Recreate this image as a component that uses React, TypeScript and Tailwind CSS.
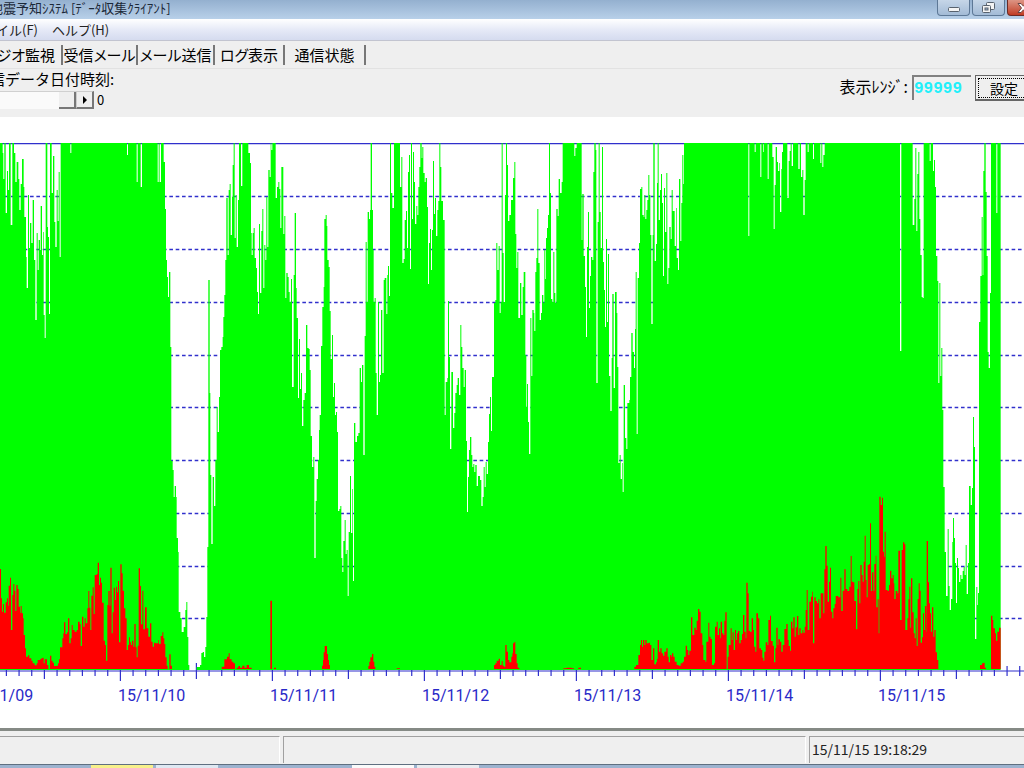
import { useState } from 'react';

type Block = { x: number; steps: string };

const tabs = [
  { id: 'radio', label: 'ラジオ監視', width: 'w-[85px]' },
  { id: 'inbox', label: '受信メール', width: 'w-[75px]' },
  { id: 'outbox', label: 'メール送信', width: 'w-[77px]' },
  { id: 'log', label: 'ログ表示', width: 'w-[70px]' },
  { id: 'status', label: '通信状態', width: 'w-[81px]' },
];

const days = [
  { x: -32, label: '15/11/09' },
  { x: 120, label: '15/11/10' },
  { x: 272, label: '15/11/11' },
  { x: 424, label: '15/11/12' },
  { x: 576, label: '15/11/13' },
  { x: 728, label: '15/11/14' },
  { x: 880, label: '15/11/15' },
];

const gridLines = [196, 249, 302, 355, 407, 460, 513, 566, 618];

// Each block starts at x; steps are "sample,level" with three samples per unit.
const peakBlocks: Block[] = [
  {
    x: 0,
    steps:
      '0,143 8,153 10,179 13,143 17,213 21,171 24,190 27,143 32,225 37,143 42,153 46,182 50,162 55,179 58,210 62,184 66,159 71,187 73,217 78,257 80,288 84,195 87,248 90,223 94,243 98,200 102,260 106,320 110,233 113,270 116,240 120,250 122,206 126,255 129,232 131,315 134,338 137,143 142,227 144,237 147,314 150,143 155,193 159,156 163,222 166,247 170,190 173,221 176,172 179,257 182,143 211,153 214,143 381,155 384,143 410,182 413,143 422,187 426,143 473,182 476,143 479,182 483,143 491,162 495,209 498,260 501,277 504,297 507,272 511,347 514,461 518,470 521,497 524,486 528,497 530,538 534,552 536,612 541,618 545,632 551,627 556,610 559,602 562,637 565,665 568,670 590,667 600,665 604,653 608,652 612,657 616,647 619,617 622,547 625,280 629,393 631,475 634,544 638,477 642,506 646,460 650,407 653,432 657,397 660,350 664,347 668,337 670,317 673,295 676,260 679,198 683,255 686,190 689,184 692,235 696,197 698,165 701,143 704,238 707,195 710,247 714,200 717,143 723,186 727,143 745,153',
  },
  {
    x: 250,
    steps:
      '0,163 3,233 5,255 8,233 11,228 14,258 18,268 21,292 24,314 27,224 30,293 34,231 37,209 40,288 43,245 46,260 49,197 52,247 55,170 59,177 62,143 64,150 67,143 77,198 81,187 85,182 88,189 91,228 94,167 100,234 103,216 106,298 109,273 113,277 116,292 119,302 123,279 126,387 131,275 134,213 138,288 140,318 144,398 147,339 150,389 153,373 156,426 160,400 164,393 168,325 172,348 176,349 179,370 182,436 186,467 190,457 193,558 197,501 200,479 204,460 207,430 209,415 213,346 217,307 221,287 223,219 227,215 230,226 232,260 236,267 239,311 242,359 246,335 249,397 252,383 255,415 258,412 261,432 264,511 268,509 271,506 274,558 277,572 280,541 284,520 287,554 290,550 293,596 296,532 300,476 303,533 307,489 309,581 312,423 316,442 321,436 325,433 329,368 333,382 336,365 340,455 344,336 347,242 350,302 353,212 357,219 360,210 362,143 366,210 369,250 371,302 374,298 377,373 380,415 384,302 387,382 390,375 393,310 397,373 401,280 404,278 409,314 412,275 414,266 417,296 420,143 423,193 427,208 432,143 450,187 454,157 457,263 461,259 464,220 468,211 471,248 474,172 477,155 480,269 483,143 486,219 489,152 492,182 495,224 499,206 502,215 505,187 508,167 511,143 515,158 517,147 520,173 524,182 527,178 531,207 534,284 537,243 540,229 543,270 546,230 549,161 552,214 555,198 558,236 562,210 565,201 568,143 571,167 574,201 579,220 584,415 587,382 592,378 594,301 597,357 600,449 604,372 609,428 613,413 616,393 620,385 623,378 627,395 631,325 634,347 637,368 641,387 644,370 648,441 651,512 654,477 657,450 660,437 664,455 667,467 670,464 673,472 676,465 680,486 684,476 690,480 694,506 698,497 701,467 704,487 707,462 710,474 714,442 717,414 720,397 723,431 726,377 732,303 736,300 739,243 742,270 746,246 749,313',
  },
  {
    x: 500,
    steps:
      '2,302 5,143 8,253 11,302 15,195 18,143 21,165 24,221 28,215 33,200 39,178 43,162 46,234 49,268 52,252 55,318 60,283 64,315 68,287 71,272 76,355 79,407 81,384 84,422 87,454 91,318 94,376 97,310 101,313 103,331 106,272 109,258 112,209 115,263 119,320 123,313 126,295 130,303 133,250 136,279 138,238 141,228 144,215 147,143 150,193 153,299 157,302 160,252 163,293 166,303 169,209 173,216 176,179 180,193 185,182 188,143 223,156 226,148 230,143 245,240 247,194 251,256 255,287 258,337 261,247 264,212 267,308 270,276 273,257 277,260 280,172 283,143 287,150 289,383 293,222 296,143 299,212 302,248 306,147 309,262 312,290 315,327 318,239 321,322 324,254 327,376 331,411 335,358 337,294 341,388 345,292 350,313 352,367 355,463 359,455 362,479 366,463 368,492 371,385 375,438 379,449 382,403 388,400 390,377 394,333 398,352 402,368 405,329 407,272 410,434 413,278 417,243 420,189 424,187 427,215 431,217 433,195 436,219 439,210 442,200 445,175 448,195 451,235 454,324 458,235 460,143 464,261 468,244 471,183 473,143 476,220 480,190 483,174 486,203 489,276 492,188 495,232 499,173 502,284 505,268 508,227 512,239 515,190 518,211 524,246 528,208 530,258 534,270 537,179 541,241 544,203 547,155 550,184 552,143 745,236 748,143',
  },
  {
    x: 750,
    steps:
      '0,143 14,152 17,143 31,177 34,143 40,152 42,143 53,179 56,143 67,157 71,229 74,185 77,147 81,162 84,171 88,163 90,212 94,169 96,152 99,143 112,198 116,161 119,151 122,143 125,166 129,143 145,169 149,143 153,177 157,170 160,215 164,180 167,143 173,152 176,143 189,159 192,143 211,163 214,143 217,167 220,155 224,143 450,351 454,143 488,225 493,199 496,148 499,231 502,174 505,152 508,219 511,255 515,297 518,298 521,143 539,161 542,143 549,171 552,160 555,187 558,256 562,281 565,383 568,283 571,376 574,348 577,410 580,487 584,552 588,596 593,529 596,586 599,610 603,599 607,542 609,518 612,538 615,563 618,603 621,558 624,568 627,582 631,575 634,579 638,571 641,567 644,575 647,545 650,594 654,563 657,486 662,505 666,488 669,417 672,447 675,639 679,587 682,605 684,593 687,322 691,276 695,217 698,275 700,171 703,143 707,192 710,256 713,352 716,368 720,293 723,143 739,213 742,143 752,670',
  },
];

// Levels here are also in thirds of a unit, counted down from 400.
const noiseBlocks: Block[] = [
  {
    x: 0,
    steps:
      '0,507 3,595 6,635 9,612 12,638 17,607 21,595 24,617 26,557 30,533 33,690 37,585 40,552 43,572 46,633 49,555 53,567 56,620 60,638 62,618 65,640 69,655 71,705 75,745 78,770 84,766 88,775 94,782 98,790 104,796 110,790 113,780 120,778 124,775 128,773 131,790 134,778 141,795 145,808 150,767 154,782 158,788 162,798 170,797 174,790 177,778 180,742 187,715 190,700 192,667 196,702 201,697 204,655 208,730 212,715 215,675 218,690 224,695 230,690 234,665 239,672 242,738 246,650 250,680 254,655 257,670 262,625 265,573 268,623 271,690 274,587 278,562 281,642 284,525 290,522 293,488 297,555 300,533 303,548 306,608 311,722 315,735 318,782 322,615 325,573 329,617 331,503 335,700 338,637 341,563 345,600 348,560 351,577 354,543 357,727 361,493 365,520 368,572 372,625 376,655 380,750 384,735 387,712 390,727 393,735 396,722 400,740 403,672 407,742 410,772 413,737 416,505 420,558 423,673 427,572 430,688 435,622 440,685 445,710 450,670 454,725 458,740 462,728 466,730 475,720 477,732 482,708 487,697 490,715 493,732 496,772 500,797 503,808 508,763 512,797 516,808 665,800 673,778 681,770 686,760 689,778 695,785 700,790 705,808 710,803 715,798 720,803 727,797 733,803 740,795 747,803',
  },
  {
    x: 250,
    steps:
      '0,803 5,808 61,602 66,808 72,803 78,808 216,797 219,780 221,757 224,738 231,762 234,780 237,795 240,808 355,798 358,785 361,772 366,762 370,785 373,800 376,808 440,805 450,808 732,795 736,790 740,782 746,776',
  },
  {
    x: 500,
    steps:
      '0,795 5,783 8,797 12,800 16,735 20,755 24,780 28,787 34,770 37,760 39,730 43,726 46,762 50,790 53,803 58,808 190,805 200,803 215,805 222,808 235,803 243,808 403,800 408,795 415,765 420,735 423,720 426,740 429,720 433,735 436,720 440,730 446,728 450,735 454,780 459,745 463,793 468,787 471,777 473,720 477,755 481,745 485,760 489,767 493,755 499,745 503,770 506,787 510,765 514,770 516,760 520,770 524,785 530,795 536,797 542,790 548,785 552,770 557,737 561,750 565,765 568,752 573,652 577,705 583,683 587,690 590,662 594,627 598,635 602,700 607,735 610,780 616,785 619,725 625,668 628,710 632,717 636,795 642,790 645,680 650,665 653,705 657,685 660,715 662,665 666,700 670,705 673,662 676,637 680,808 683,770 686,735 692,685 695,720 698,697 701,750 705,690 708,720 711,700 714,693 718,730 722,720 726,702 729,645 733,695 737,715 739,548 743,580 746,692',
  },
  {
    x: 750,
    steps:
      '0,695 5,655 9,690 12,740 16,755 19,640 24,655 28,745 33,750 37,773 40,782 43,755 47,727 52,735 55,660 60,647 63,723 68,737 72,787 76,745 79,683 83,735 85,718 90,725 94,755 98,735 103,687 109,672 113,720 116,738 120,752 123,665 127,685 130,652 134,710 137,682 141,648 145,705 148,685 152,700 157,690 160,698 164,680 167,630 170,570 173,690 178,605 183,590 187,575 189,730 193,592 197,603 201,610 205,598 208,655 212,580 220,640 223,508 226,438 230,497 233,605 237,545 240,503 243,635 247,655 250,625 254,612 257,588 265,592 271,533 274,633 278,572 283,508 287,567 292,573 298,560 302,468 305,545 309,547 313,603 318,688 322,567 325,543 328,610 331,495 335,525 338,545 341,485 344,407 347,540 350,592 353,495 357,492 360,370 363,573 366,517 370,572 373,492 377,467 379,622 383,598 386,700 388,290 392,315 396,293 399,455 402,470 404,395 407,570 412,572 417,555 420,512 424,535 428,525 431,550 433,597 437,573 442,580 445,452 450,660 455,450 459,427 463,433 466,690 472,655 475,598 478,560 481,683 483,535 487,637 491,700 494,715 497,655 500,738 503,597 506,550 509,572 512,728 516,712 519,640 522,690 525,618 529,695 530,423 534,547 537,610 540,640 543,695 546,622 550,710 553,690 557,757 561,780 565,808 690,795 696,790 701,788 704,803 708,808 723,647 727,660 730,685 735,700 738,722 742,695 747,683 752,808',
  },
];

function stepPath(blocks: Block[], base: number, level: (v: number) => number) {
  let d = `M0 ${base}`;
  for (const block of blocks) {
    for (const step of block.steps.split(' ')) {
      const [sample, value] = step.split(',').map(Number);
      d += `H${(block.x + sample / 3).toFixed(2)}V${level(value).toFixed(2)}`;
    }
  }
  return `${d}V${base}Z`;
}

const peakPath = stepPath(peakBlocks, 670, (v) => v);
const noisePath = stepPath(noiseBlocks, 669, (v) => Math.min(669, 400 + v / 3));

// Two-hour ticks, longer at noon and at midnight
const ticks = Array.from({ length: 84 }, (_, i) => ({
  x: -32 + (i * 152) / 12,
  size: i % 12 === 0 ? 10 : i % 6 === 0 ? 8 : 5,
}));

function Chart() {
  return (
    <svg viewBox="0 117 1024 611" className="block w-full bg-white" role="img" aria-label="ラジオ監視グラフ">
      <g stroke="#3030cc" fill="none">
        <path d="M0 143.6H1024" strokeWidth="1.3" />
        {gridLines.map((y) => (
          <path
            key={y}
            d={`M0 ${y + 0.5}H1024`}
            strokeWidth="1.3"
            strokeDasharray="3.6 2.733"
            strokeDashoffset="-4.7"
          />
        ))}
        <path d="M0 671H1024" strokeWidth="1.2" />
        {ticks.map((t) => (
          <path key={t.x} d={`M${(t.x + 0.4).toFixed(2)} ${671 - t.size}v${t.size * 2}`} strokeWidth="1.2" />
        ))}
      </g>
      <path d={peakPath} fill="#00ff00" />
      <path d={noisePath} fill="#ff0000" />
      <g className="fill-[#2a2ac8] font-[Roboto,sans-serif] text-[16px]">
        {days.map((day) => (
          <text key={day.label} x={day.x - 2} y="701">
            {day.label}
          </text>
        ))}
      </g>
    </svg>
  );
}

export default function App() {
  const [active, setActive] = useState('radio');
  const [range, setRange] = useState('99999');
  const [position, setPosition] = useState(100);

  return (
    <div className="flex min-h-screen flex-col overflow-hidden bg-[#efefef] font-['Noto_Sans_CJK_JP',sans-serif] text-black">
      {/* Title bar */}
      <header className="flex h-[19px] items-start justify-between overflow-hidden bg-linear-to-b from-[#94b0cf] to-[#b8d0e9]">
        <h1 className="-ml-[10px] whitespace-nowrap text-[13px] leading-4 text-[#1b2838]">
          地震予知ｼｽﾃﾑ [ﾃﾞｰﾀ収集ｸﾗｲｱﾝﾄ]
        </h1>
        <div className="-mr-4 flex gap-[2px]">
          <button
            aria-label="最小化"
            className="flex h-4 w-[33px] items-center justify-center rounded-b border border-t-0 border-[#5d7896] bg-linear-to-b from-[#c6d6e8] to-[#a3bbd6]"
          >
            <svg width="12" height="5" className="mt-1">
              <rect x="0.5" y="0.5" width="11" height="4" rx="1" fill="#f4f4f4" stroke="#58626e" />
            </svg>
          </button>
          <button
            aria-label="元に戻す"
            className="flex h-4 w-[33px] items-center justify-center rounded-b border border-t-0 border-[#5d7896] bg-linear-to-b from-[#c6d6e8] to-[#a3bbd6]"
          >
            <svg width="13" height="12" fill="#f4f4f4" stroke="#58626e">
              <rect x="4.5" y="0.5" width="8" height="7" rx="1" />
              <rect x="0.5" y="3.5" width="8" height="7" rx="1" />
              <rect x="3" y="6" width="3" height="2" fill="#a3bbd6" />
            </svg>
          </button>
          <button
            aria-label="閉じる"
            className="flex h-4 w-[33px] items-center justify-center rounded-b border border-t-0 border-[#6b2a24] bg-linear-to-b from-[#dc9484] to-[#c03a22]"
          >
            <svg width="13" height="10" viewBox="0 0 13 10">
              <path d="M1 .5h3l2.500 2.700L9 .5h3L8.500 5l3.500 4.500H9L6.500 6.800 4 9.500H1L4.500 5z" fill="#fff" stroke="#6a4444" />
            </svg>
          </button>
        </div>
      </header>

      {/* Menu bar */}
      <nav className="flex h-[22px] items-center gap-[14px] border-b border-[#c2c4d0] bg-linear-to-b from-white via-[#e6eaf7] to-[#d5dbef] text-[13px] leading-5 text-[#222]">
        <button className="-ml-[30px] whitespace-nowrap">ファイル(F)</button>
        <button className="whitespace-nowrap">ヘルプ(H)</button>
      </nav>

      {/* Tabs */}
      <div role="tablist" className="-ml-[22px] flex h-7 items-center border-b border-[#e2e2e2] text-[15px] leading-5">
        {tabs.map((tab) => (
          <button
            key={tab.id}
            role="tab"
            aria-selected={active === tab.id}
            onClick={() => setActive(tab.id)}
            className={`h-5 whitespace-nowrap border-r-2 border-[#777] text-center [font-feature-settings:'palt'] ${tab.width} ${
              active === tab.id ? 'pb-1' : ''
            }`}
          >
            {tab.label}
          </button>
        ))}
      </div>

      {/* Toolbar */}
      <section className="flex h-12 items-start justify-between">
        <div>
          <label htmlFor="position" className="-ml-[25px] mb-[2px] block whitespace-nowrap text-[15px] leading-5">
            受信データ日付時刻:
          </label>
          <div className="flex h-[18px] items-center">
            <input
              id="position"
              type="range"
              value={position}
              onChange={(e) => setPosition(Number(e.target.value))}
              className="h-[18px] w-[76px] appearance-none border-t border-[#d0d0d0] bg-[#fafafa] [&::-webkit-slider-thumb]:h-[17px] [&::-webkit-slider-thumb]:w-[17px] [&::-webkit-slider-thumb]:appearance-none [&::-webkit-slider-thumb]:border-r-2 [&::-webkit-slider-thumb]:border-b-2 [&::-webkit-slider-thumb]:border-[#777] [&::-webkit-slider-thumb]:bg-[#efefef]"
            />
            <button
              aria-label="次へ"
              className="flex h-[18px] w-[18px] items-center justify-center border border-r-2 border-b-2 border-[#777] border-t-[#ccc] border-l-[#ccc]"
            >
              <svg width="4" height="8">
                <path d="M0 0l4 4-4 4z" />
              </svg>
            </button>
            <output className="ml-[3px] text-[13px] leading-4">{100 - position}</output>
          </div>
        </div>

        <div className="-mr-[10px] flex items-start pt-[6px]">
          <label htmlFor="range" className="mr-1 whitespace-nowrap text-[16px] leading-[22px]">
            表示ﾚﾝｼﾞ:
          </label>
          <input
            id="range"
            value={range}
            onChange={(e) => setRange(e.target.value)}
            className="h-[25px] w-[59px] border-t-2 border-l-2 border-[#808080] bg-[#efefef] font-['Liberation_Mono',monospace] text-[16px] font-bold text-[#22f0fa]"
          />
          <button className="ml-1 h-[26px] w-[59px] border border-r-2 border-b-2 border-[#666] p-[2px] text-[14px] leading-[18px]">
            <span className="block border border-dotted border-black">設定</span>
          </button>
        </div>
      </section>

      <main>
        <Chart />
      </main>

      {/* Status bar */}
      <footer className="flex h-9 gap-[3px] border-t-[3px] border-[#858a85] pt-[5px] pb-px text-[14px] leading-[25px]">
        <div className="w-[280px] shrink-0 border-t border-r border-t-[#a0a0a0] border-r-white" />
        <div className="flex-1 border border-b-0 border-t-[#a0a0a0] border-r-white border-l-[#a0a0a0]" />
        <div className="w-[215px] shrink-0 border-t border-l border-[#a0a0a0] pl-[2px] text-[#222]">15/11/15 19:18:29</div>
      </footer>
      <div className="flex h-1 gap-[3px] border-t border-[#5f6f80] bg-[#9db3cf] pl-[91px]">
        <div className="w-[62px] bg-[#f7f08a]" />
        <div className="w-[62px] bg-[#dfe8f2]" />
        <div className="ml-[131px] w-[62px] bg-[#fafafa]" />
        <div className="w-[62px] bg-[#e8eaee]" />
      </div>
    </div>
  );
}
